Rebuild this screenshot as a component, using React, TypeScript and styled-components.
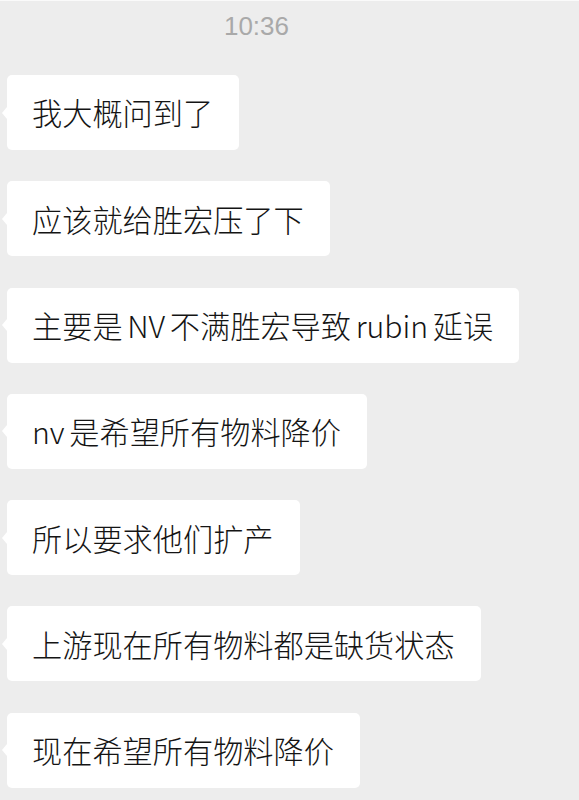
import React from 'react';
import styled, { createGlobalStyle } from 'styled-components';

const messages = [
  '我大概问到了',
  '应该就给胜宏压了下',
  '主要是 NV 不满胜宏导致 rubin 延误',
  'nv 是希望所有物料降价',
  '所以要求他们扩产',
  '上游现在所有物料都是缺货状态',
  '现在希望所有物料降价',
];

const GlobalStyle = createGlobalStyle`
  html, body {
    margin: 0;
    padding: 0;
    background: #ededed;
  }
  * {
    box-sizing: border-box;
  }
`;

function App() {
  return (
    <>
      <GlobalStyle />
      <ChatBlock>
        <TimeStamp>10:36</TimeStamp>
        <MessageList>
          {messages.map((text) => (
            <MessageRow key={text}>
              <Bubble>{text}</Bubble>
            </MessageRow>
          ))}
        </MessageList>
      </ChatBlock>
    </>
  );
}

const ChatBlock = styled.div`
  width: 579px;
  height: 800px;
  overflow: hidden;
  background: #ededed;
  border-top: 1px solid #fafafa;
  display: flex;
  flex-direction: column;
  padding-top: 10px;
`;

const TimeStamp = styled.div`
  width: 513px;
  height: 30px;
  line-height: 30px;
  text-align: center;
  font-family: 'Liberation Sans', Arial, sans-serif;
  font-size: 26px;
  color: #a9a9a9;
`;

const MessageList = styled.div`
  display: flex;
  flex-direction: column;
  gap: 31.3px;
  margin-top: 34px;
  padding-left: 7px;
`;

const MessageRow = styled.div`
  display: flex;
  align-items: center;
`;

const Bubble = styled.div`
  position: relative;
  display: flex;
  align-items: center;
  height: 75px;
  padding: 0 26px 0 25px;
  background: #ffffff;
  border-radius: 5px;
  font-family: 'Noto Sans CJK SC', 'Noto Sans', sans-serif;
  font-size: 30.2px;
  font-weight: 300;
  line-height: 1;
  word-spacing: -2px;
  color: #141414;
  white-space: nowrap;

  &::before {
    content: '';
    position: absolute;
    left: -5px;
    top: 50%;
    margin-top: -6px;
    border-style: solid;
    border-width: 6px 5px 6px 0;
    border-color: transparent #ffffff transparent transparent;
  }
`;

export default App;
